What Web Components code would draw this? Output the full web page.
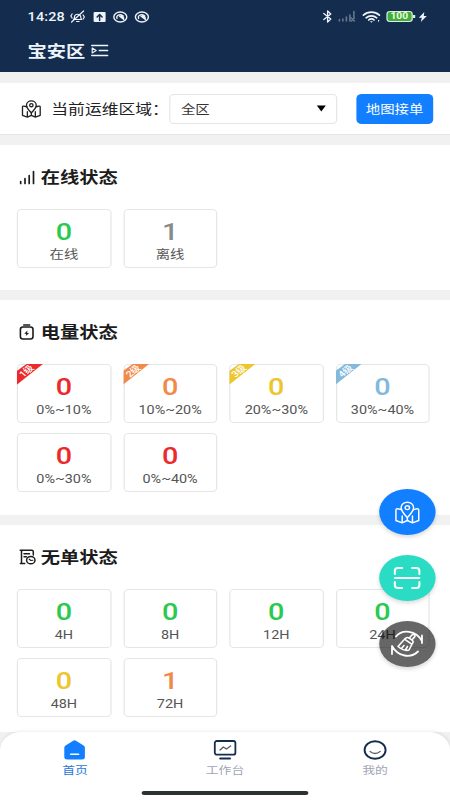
<!DOCTYPE html>
<html lang="zh-CN">
<head>
<meta charset="utf-8">
<meta name="viewport" content="width=device-width">
<title>首页</title>
<style>
html,body{margin:0;padding:0;width:450px;height:800px;overflow:hidden;background:#fff}
</style>
</head>
<body>
<ops-app></ops-app>
<script>
const make = (tag, html) => customElements.define(tag, class extends HTMLElement {
  constructor() {
    super();
    this.attachShadow({ mode: 'open' });
  }
  connectedCallback() {
    const t = document.createElement('template');
    t.innerHTML = typeof html === 'function' ? html(this) : html;
    this.shadowRoot.replaceChildren(t.content.cloneNode(true));
  }
});

/* Icons: [width, height, markup] */
const MAP = '<path d="M6 7.500 2.500 6.800Q1 6.500 1 8v9l5.500 2 4.500-2 4.500 2L21 17V8q0-1.500-1.500-1.200L16.500 7.500M6.500 13v6M11 15v2M15.500 13v6"/><path d="M11 14.500C8 11 5.500 8.800 5.500 5.800a5.500 4.800 0 0 1 11 0c0 3-2.500 5.200-5.500 8.700z"/><ellipse cx="11" cy="5.800" rx="1.900" ry="1.700"/>';
const ICONS = {
  mute: [16, 13, '<path d="M4 9.500c1-1 1-2 1-3.500a3.300 3 0 0 1 6 0c0 1.500 0 2.500 1 3.500zM7 11.500h2.500M2 12 14 1M2.500 4 1.200 6 2.500 8M13.500 5l1.300 2-1.300 2" stroke-width="1.200"/>'],
  upload: [12, 10, '<rect width="12" height="10" rx="1" fill="currentColor" stroke="none"/><path d="M6 8.500V3M3.500 5 6 2.500 8.500 5" stroke="#142d4e" stroke-width="1.500"/>'],
  disc: [15, 12, '<ellipse cx="7.500" cy="6" rx="6.500" ry="5" stroke-width="1.400"/><path d="M4.200 7.500C3 4 7 2.500 10.500 5M6.500 5l4.500 3.500M8 4.500l3 2.500" stroke-width="1.300"/>'],
  bt: [10, 13, '<path d="M1 3.500 8 9 4.800 12V1L8 4 1 9.500" stroke-width="1.300"/>'],
  signal: [17, 11, '<path d="M1 10V8.500M4.500 10V8M8 10V6M11.500 10V4M15.500 6V.5M13 7l3 3M16 7l-3 3" stroke-width="1.600"/>'],
  wifi: [18, 12, '<path d="M1 4.200c4.500-4 11.500-4 16 0M3.700 6.800c3-2.700 7.600-2.700 10.600 0M6.300 9c1.500-1.400 3.900-1.400 5.400 0" stroke-width="1.700"/><path d="M7.500 10.300h3L9 11.800zM15.500 9h1.500l-1 2.500z" fill="currentColor" stroke="none"/>'],
  bolt: [8, 10, '<path d="M5.500 0 0 5.800h3L2 10l6-6H5z" fill="currentColor" stroke="none"/>'],
  menu: [17, 13, '<path d="M.5 1.500h16M8 6.500h8.500M.5 11.500h16" stroke-width="1.300"/><path d="M1 4v5l4-2.500z" stroke-width="1.200"/>'],
  map: [19.5, 18, '<g transform="scale(.886 .9)" stroke-width="1.500">' + MAP + '</g>'],
  bars: [16, 13, '<path d="M1.500 12.500v-2M5.800 12.500v-5M10 12.500v-8M14.300 12.500V.5" stroke-width="1.700"/>'],
  battery: [15, 16, '<rect x="1.200" y="3" width="12.600" height="12" rx="2.500" stroke-width="1.600"/><path d="M4.500 1h6" stroke-width="1.500"/><path d="M8.300 6.500 5 9.700h2.100l-.6 2.300L10 9H7.900z" fill="currentColor" stroke="none"/>'],
  order: [17, 16, '<path d="M5.500 14.500H1.200M2.300 14V2.500Q2.300 1.200 3.600 1.200h9q1.500 0 1.500 1.500V6M1 1.200h2M4.800 4.800h5.500M4.800 7.700h2.500" stroke-width="1.500"/><ellipse cx="11.600" cy="11.200" rx="4.200" ry="3.600" stroke-width="1.500"/><path d="M10 10.200l1.700 1.300 2-.2" stroke-width="1.100"/>'],
  caret: [9, 7, '<path d="M0 .5h9L4.500 6.500z" fill="currentColor" stroke="none"/>'],
  bigmap: [25, 23, '<g transform="scale(1.140 1.150)">' + MAP + '</g>'],
  scan: [27, 22, '<path d="M1.200 7V4q0-3 3-3H8.500M18.500 1h4.300q3 0 3 3v3M25.800 15v3q0 3-3 3h-4.300M8.500 21H4.200q-3 0-3-3v-3M1.200 11h24.600" stroke-width="2"/>'],
  broom: [34, 28, '<path d="M6 6.500C12 -1 26 0 32 11V5.500M32 11v2M28 21.500C21 28.500 8 27 2 16v8" stroke-width="1.800"/><path d="M19 8.200 22 5q1.200-1.200 2.400-.3t.2 2.200L21.800 10M15.500 8.300q1.800-1.500 3.800-.1l2.700 1.900q2 1.500.5 3.200l-.8.900-7.200-5zM13.800 10 8 16.500Q14 21.500 19 20l3-5.800M11.500 18.500l2.500-3M15.300 20l2.200-3.500" stroke-width="1.600"/>'],
  home: [22, 20, '<path d="M9.600.7q1.400-.8 2.800 0L20 5.500q1.300.8 1.300 2V17q0 2.500-3 2.500H3.700Q.7 19.500.7 17V7.500q0-1.200 1.300-2z" fill="#117fff" stroke="none"/><path d="M7 14.200h8" stroke="#fff" stroke-width="1.500"/>'],
  work: [23, 20, '<rect x="1.200" y="1" width="20.600" height="13.700" rx="2" stroke-width="1.800"/><path d="M6.500 18.500h10" stroke-width="1.800"/><path d="M6.500 10 9.800 7l3 2L17 6" stroke-width="1.400" stroke="#555e6c"/>'],
  me: [23, 20, '<ellipse cx="11.500" cy="10" rx="10.500" ry="8.800" stroke-width="1.900"/><path d="M6.500 11.500q5 4 10 0" stroke-width="1.300" stroke="#555e6c"/>']
};
/* Screen is authored at 375 wide and stretched to 450; icon art is in stretched units. */
make('ops-icon', el => {
  const [w, h, art] = ICONS[el.getAttribute('name')];
  return `<style>:host{display:block;flex:none;width:${w / 1.2}px;height:${h}px}svg{display:block;width:100%;height:100%;overflow:visible;fill:none;stroke:currentColor;stroke-width:1.300;stroke-linecap:round;stroke-linejoin:round}</style>
  <svg viewBox="0 0 ${w} ${h}" preserveAspectRatio="none">${art}</svg>`;
});

make('ops-header', `<style>
:host{display:block;height:72px;box-sizing:border-box;background:#142d4e;color:#eef4fb}
.status{display:flex;align-items:center;height:33px;padding:0 19.500px 0 23px;box-sizing:border-box}
.time{font:500 12px/31px Roboto,sans-serif;letter-spacing:.1px;width:36px;padding-top:2px}
.left{display:flex;align-items:center;flex:1}
.bat{box-sizing:border-box;width:22px;height:10.500px;border:1.200px solid #d9f2dd;border-radius:3px;background:#43aa3d;font:700 8.500px/8.500px Roboto,sans-serif;color:#e9ffdc;text-align:center}
.nub{width:1.500px;height:3px;background:#d9f2dd;margin:0 3px 0 .6px}
.title{display:flex;align-items:center;padding-left:23px;height:34px;font-size:16px;font-weight:700;gap:5px}
</style>
<div class="status"><div class="left"><span class="time">14:28</span><ops-icon name="mute" style="margin:0 6px 0 -.8px"></ops-icon><ops-icon name="upload" style="margin:0 6.500px 0 .3px"></ops-icon><ops-icon name="disc" style="margin-right:5px"></ops-icon><ops-icon name="disc"></ops-icon></div>
<ops-icon name="bt" style="margin-right:5px"></ops-icon><ops-icon name="signal" style="color:#64778f;margin-right:5.500px"></ops-icon><ops-icon name="wifi" style="margin-right:5px"></ops-icon><div class="bat">100</div><div class="nub"></div><ops-icon name="bolt"></ops-icon></div>
<div class="title"><span>宝安区</span><ops-icon name="menu"></ops-icon></div>`);

make('ops-filter', `<style>
:host{display:flex;align-items:center;height:52px;box-sizing:border-box;margin:11px 0;padding:0 14px 0 18px;background:#fff;border-bottom:1px solid #e5e5e5;font-size:14px;color:#222}
.label{margin-left:8.500px;width:98.700px;white-space:nowrap;line-height:20px;padding-top:1px}
.select{box-sizing:border-box;width:140px;height:30px;border:1px solid #e6e6e6;border-radius:4px;display:flex;align-items:center;justify-content:space-between;padding:0 8.500px;font-size:12px;color:#333}
.btn{margin-left:15.500px;width:64.500px;height:30px;border-radius:4.500px;background:#117fff;color:#fff;font-size:12px;line-height:32px;text-align:center}
</style><ops-icon name="map"></ops-icon><span class="label">当前运维区域：</span><div class="select"><span>全区</span><ops-icon name="caret" style="color:#000"></ops-icon></div><div class="btn">地图接单</div>`);

make('ops-section', el => `<style>
:host{display:block;background:#fff;padding:19px 14px 0;box-sizing:border-box;margin-bottom:10.500px}
h2{display:flex;align-items:center;margin:0 0 20.800px;padding-left:1.600px;height:24px;font-size:16px;font-weight:600;color:#1c1c1c}
.ic{width:18.400px;display:flex;padding-top:2px}
.grid{display:grid;grid-template-columns:repeat(4,78.500px);gap:10px;grid-auto-rows:59px}
</style><h2><span class="ic"><ops-icon name="${el.getAttribute('icon')}"></ops-icon></span>${el.getAttribute('heading')}</h2><div class="grid"><slot></slot></div>`);

make('ops-card', el => `<style>
:host{display:flex;flex-direction:column;align-items:center;position:relative;box-sizing:border-box;border:1px solid #e6e6e6;border-radius:4px;padding-top:9px;color:#555;font-size:12px}
b{font:500 24px/26px Roboto,sans-serif;color:${el.getAttribute('color')}}
.l{line-height:20px}
.tag{position:absolute;left:-1px;top:-1px;width:22px;height:21px;background:${el.getAttribute('color')};clip-path:polygon(38% 0,100% 0,0 100%,0 34%)}
.tag span{position:absolute;left:-3px;top:1.500px;width:22px;text-align:center;font-size:8.500px;line-height:12px;font-weight:500;color:#fff;transform:rotate(-44deg)}
</style><b>${el.getAttribute('value')}</b><span class="l"><slot></slot></span>${el.hasAttribute('tag') ? `<div class="tag"><span>${el.getAttribute('tag')}</span></div>` : ''}`);

make('ops-fab', el => `<style>:host{display:flex;align-items:center;justify-content:center;width:46.700px;height:46px;border-radius:50%;color:#fff;box-shadow:0 2px 4px rgba(0,0,0,.16)}</style><ops-icon name="${el.getAttribute('icon')}"></ops-icon>`);

make('ops-tab', el => `<style>:host{display:flex;flex-direction:column;align-items:center;flex:1;padding-top:8px;color:#142d4e}
span{font-size:10.700px;line-height:16px;margin-top:3px;color:${el.hasAttribute('active') ? '#2878d8' : '#a0a5b4'}}</style><ops-icon name="${el.getAttribute('icon')}"></ops-icon><span><slot></slot></span>`);

make('ops-tabbar', `<style>
:host{display:block;position:absolute;left:0;right:0;bottom:0;height:68px;background:#fff;border-radius:18px 18px 0 0;box-shadow:0 -1px 3px rgba(0,0,0,.07)}
.row{display:flex;height:59px}.bar{width:139.500px;height:3.500px;border-radius:2px;background:#2d312f;margin:0 auto}
</style><div class="row"><slot></slot></div><div class="bar"></div>`);

make('ops-app', `<style>
:host{display:block;position:relative;width:375px;height:800px;overflow:hidden;background:#f1f1f1;transform:scaleX(1.2);transform-origin:0 0;font-family:Roboto,"Noto Sans CJK SC",sans-serif}
.fabs{position:absolute;left:316.300px;top:489px;display:flex;flex-direction:column;gap:20px}
</style>
<ops-header></ops-header><ops-filter></ops-filter>
<ops-section icon="bars" heading="在线状态" style="height:144.500px;margin-top:-1px"><ops-card value="0" color="#2bc94f">在线</ops-card><ops-card value="1" color="#8a8a8a">离线</ops-card></ops-section>
<ops-section icon="battery" heading="电量状态" style="height:214.500px"><ops-card value="0" color="#ec2a2c" tag="1级">0%~10%</ops-card><ops-card value="0" color="#f08a4b" tag="2级">10%~20%</ops-card><ops-card value="0" color="#ecc52f" tag="3级">20%~30%</ops-card><ops-card value="0" color="#83b9dc" tag="4级">30%~40%</ops-card><ops-card value="0" color="#ec2a2c">0%~30%</ops-card><ops-card value="0" color="#ec2a2c">0%~40%</ops-card></ops-section>
<ops-section icon="order" heading="无单状态" style="height:207px"><ops-card value="0" color="#2bc94f">4H</ops-card><ops-card value="0" color="#2bc94f">8H</ops-card><ops-card value="0" color="#2bc94f">12H</ops-card><ops-card value="0" color="#2bc94f">24H</ops-card><ops-card value="0" color="#ecc52f">48H</ops-card><ops-card value="1" color="#f08a4b">72H</ops-card></ops-section>
<div class="fabs"><ops-fab icon="bigmap" style="background:#117fff"></ops-fab><ops-fab icon="scan" style="background:#29dcc3"></ops-fab><ops-fab icon="broom" style="background:rgba(0,0,0,.6)"></ops-fab></div>
<ops-tabbar><ops-tab icon="home" active>首页</ops-tab><ops-tab icon="work">工作台</ops-tab><ops-tab icon="me">我的</ops-tab></ops-tabbar>`);
</script>
</body>
</html>
